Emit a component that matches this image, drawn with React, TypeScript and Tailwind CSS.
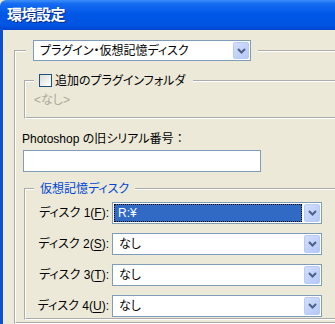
import React from 'react';

const FONT = "font-['Liberation_Sans','Noto_Sans_CJK_JP',sans-serif] [font-feature-settings:'palt']";

const Chevron = () => (
  <svg width="9" height="6" viewBox="0 0 9 6">
    <path d="M1 1 L4.5 4.5 L8 1" fill="none" stroke="#4d6185" strokeWidth="2" />
  </svg>
);

// XP style drop-down arrow button
const ArrowButton = () => (
  <span className="flex h-full w-[16px] shrink-0 items-center justify-center rounded-[2px] border border-[#b9cbf3] bg-[linear-gradient(135deg,#d2defc,#b4c8f7)]">
    <Chevron />
  </span>
);

interface ComboProps {
  value: string;
  className: string;
  selected?: boolean;
}

const Combo: React.FC<ComboProps> = ({ value, className, selected = false }) => (
  <div className={`flex border border-[#7f9db9] bg-white p-px ${className}`}>
    {selected ? (
      <div className="mr-[2px] flex flex-1 items-center border border-dotted border-black bg-[#316ac5] pl-[3px] text-white">
        {value}
      </div>
    ) : (
      <div className="flex flex-1 items-center pl-[5px] text-black">{value}</div>
    )}
    <ArrowButton />
  </div>
);

const Mnemonic: React.FC<{ label: string; num: number; letter: string }> = ({ label, num, letter }) => (
  <span>
    {label} {num}(<span className="underline underline-offset-2">{letter}</span>):
  </span>
);

const DISKS = [
  { num: 1, letter: 'F', value: 'R:¥', selected: true },
  { num: 2, letter: 'S', value: 'なし' },
  { num: 3, letter: 'T', value: 'なし' },
  { num: 4, letter: 'U', value: 'なし' },
];

const groupBox = 'border-2 border-white [border-style:groove]';

export default function App() {
  return (
    <div className={`h-[324px] w-[335px] overflow-hidden bg-[#ece9d8] text-[12px] leading-[14px] text-black ${FONT}`}>
      {/* Title bar */}
      <div className="flex h-[30px] items-center rounded-tl-[6px] bg-[linear-gradient(180deg,#3d8ff7_0%,#166cf2_12%,#0058e6_45%,#0054e2_85%,#0044cf_100%)] pl-[7px]">
        <span className="text-[15px] font-bold tracking-[-0.5px] text-white [text-shadow:1px_1px_#0a2c8a]">環境設定</span>
      </div>

      <div className="flex">
        <div className="h-[294px] w-[3px] shrink-0 bg-[#0b4ed9]" />
        <div className="w-px shrink-0 bg-[#f4f2ea]" />

        <fieldset className={`ml-[10px] mt-[10px] w-[360px] shrink-0 pb-[2px] pl-[8px] pt-[12px] ${groupBox}`}>
          <legend className="ml-[2px] px-[7px]">
            <Combo value="プラグイン・仮想記憶ディスク" className="h-[21px] w-[218px]" />
          </legend>

          {/* Additional plug-in folder */}
          <fieldset className={`pb-[11px] pl-[8px] pt-[6px] ${groupBox}`}>
            <legend className="flex h-[15px] items-center pl-[5px] pr-[8px]">
              <span className="mr-[3px] h-[13px] w-[13px] border border-[#1c5180] bg-[linear-gradient(135deg,#dcdcd7,#ffffff)]" />
              追加のプラグインフォルダ
            </legend>
            <div className="leading-[12px] text-[#aca899]">&lt;なし&gt;</div>
          </fieldset>

          <div className="-ml-[2px] mt-[13px]">Photoshop の旧シリアル番号 ：</div>
          <div className="-ml-[1px] mt-[4px] h-[22px] w-[238px] border border-[#7f9db9] bg-white" />

          {/* Scratch disks */}
          <fieldset className={`mt-[10px] pb-[1px] pl-[8px] pt-[6px] ${groupBox}`}>
            <legend className="h-[14px] px-[6px] text-[#0046d5]">仮想記憶ディスク</legend>
            <div className="flex flex-col gap-[9px]">
              {DISKS.map((d) => (
                <div key={d.num} className="flex items-center">
                  <div className="w-[78px] pr-[3px] text-right">
                    <Mnemonic label="ディスク" num={d.num} letter={d.letter} />
                  </div>
                  <Combo value={d.value} selected={d.selected} className="h-[22px] w-[210px]" />
                </div>
              ))}
            </div>
          </fieldset>
        </fieldset>
      </div>
    </div>
  );
}
